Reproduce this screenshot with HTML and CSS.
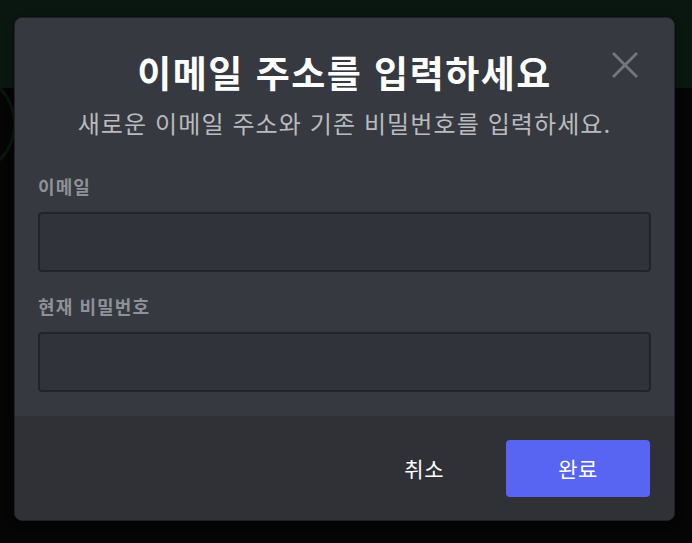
FILE: index.html
```html
<!DOCTYPE html>
<html lang="ko">
<head>
<meta charset="utf-8">
<title>이메일 주소를 입력하세요</title>
<link rel="stylesheet" href="styles.css">
</head>
<body>
<div class="backdrop">
  <div class="backdrop-top"></div>
  <div class="backdrop-ring"></div>
</div>
<div class="modal">
  <div class="modal-body">
    <button class="close" aria-label="닫기">
      <svg width="28" height="28" viewBox="0 0 28 28"><path d="M3 3 L25 25 M25 3 L3 25" stroke="#72767d" stroke-width="2.8" stroke-linecap="square"/></svg>
    </button>
    <h1 class="title">이메일 주소를 입력하세요</h1>
    <p class="subtitle">새로운 이메일 주소와 기존 비밀번호를 입력하세요.</p>
    <div class="fields">
      <label class="field">
        <span class="label">이메일</span>
        <span class="input"></span>
      </label>
      <label class="field">
        <span class="label">현재 비밀번호</span>
        <span class="input"></span>
      </label>
    </div>
  </div>
  <div class="modal-footer">
    <button class="btn-cancel">취소</button>
    <button class="btn-primary">완료</button>
  </div>
</div>
</body>
</html>
```

FILE: styles.css
```css
* { box-sizing: border-box; }
html, body { margin: 0; padding: 0; }
body {
  width: 692px;
  height: 543px;
  overflow: hidden;
  background: #050505;
  position: relative;
  font-family: "Noto Sans CJK KR", "Noto Sans", sans-serif;
  color: #fff;
}
.backdrop { position: absolute; inset: 0; }
.backdrop-top { height: 88px; background: #0a1710; }
.backdrop-ring {
  position: absolute;
  left: -96px;
  top: 70px;
  width: 112px;
  height: 108px;
  border-radius: 50%;
  background: #040504;
  border: 3px solid #0a150e;
}
.modal {
  position: absolute;
  left: 14px;
  top: 17px;
  width: 661px;
  height: 504px;
  background: #36393f;
  border: 1px solid #1f2124;
  border-radius: 8px;
  overflow: hidden;
  display: flex;
  flex-direction: column;
  box-shadow: 0 0 0 1px rgba(4,4,5,0.15), 0 2px 10px rgba(0,0,0,0.2);
}
.modal-body {
  position: relative;
  padding: 32px 23px 24px;
  flex: 1;
}
.close {
  position: absolute;
  right: 35px;
  top: 33px;
  width: 28px;
  height: 28px;
  padding: 0;
  border: 0;
  background: none;
  display: block;
}
.close svg { display: block; }
.title {
  margin: 0;
  text-align: center;
  font-size: 37px;
  font-weight: 700;
  line-height: 44px;
  letter-spacing: 1.5px;
}
.subtitle {
  margin: 14px 0 0;
  text-align: center;
  font-size: 24px;
  line-height: 30px;
  color: #b9bbbe;
  letter-spacing: 1.1px;
}
.fields {
  margin-top: 38px;
  display: flex;
  flex-direction: column;
  gap: 24px;
}
.field {
  display: flex;
  flex-direction: column;
  gap: 16px;
}
.label {
  font-size: 18px;
  line-height: 20px;
  font-weight: 700;
  color: #8e9297;
  letter-spacing: 1.1px;
}
.input {
  display: block;
  height: 60px;
  background: #303339;
  border: 2px solid #222428;
  border-radius: 4px;
}
.modal-footer {
  height: 105px;
  flex: none;
  background: #2f3136;
  padding: 23px 24px 24px;
  display: flex;
  justify-content: flex-end;
  align-items: center;
  gap: 38px;
}
.btn-cancel, .btn-primary {
  font-family: inherit;
  font-size: 21px;
  letter-spacing: 0.5px;
  color: #fff;
  border: 0;
  border-radius: 4px;
  height: 57px;
  cursor: pointer;
}
.btn-cancel {
  background: none;
  padding: 0 24px;
}
.btn-primary {
  width: 144px;
  background: #5865f2;
}
```
